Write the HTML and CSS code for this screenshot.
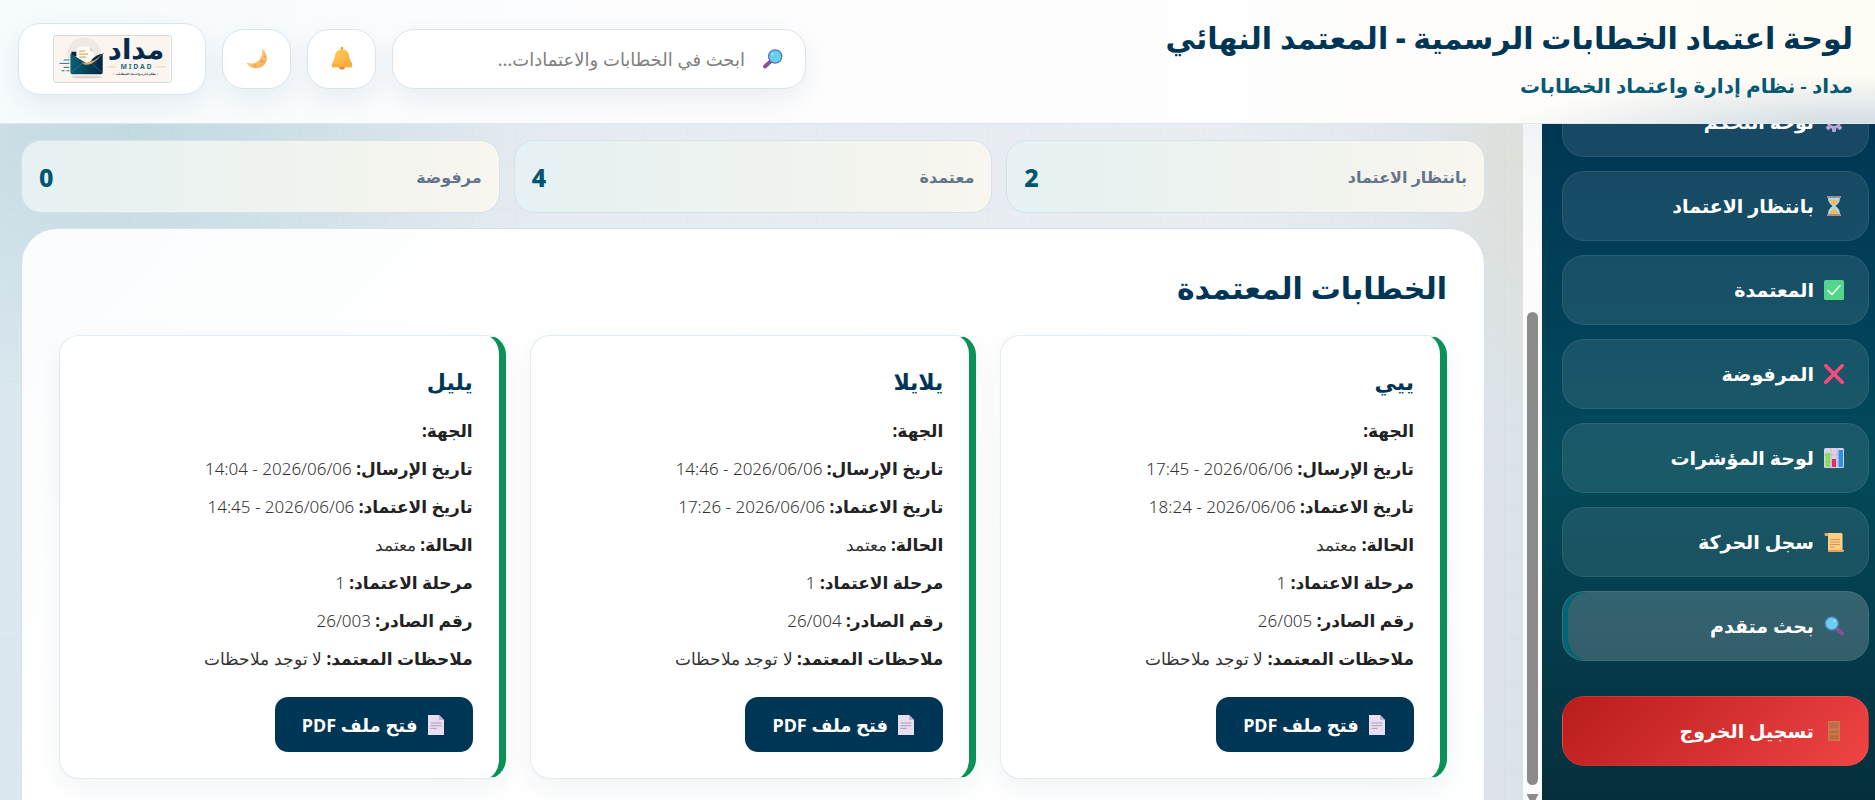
FILE: index.html
```html
<!DOCTYPE html>
<html lang="ar" dir="rtl">
<head>
  <meta charset="UTF-8" />
  <title>مداد - لوحة اعتماد الخطابات</title>
  <meta name="viewport" content="width=device-width, initial-scale=1.0"/>
  <link rel="stylesheet" href="styles.css">
</head>
<body>

  <svg class="defs" aria-hidden="true">
    <defs>
      <linearGradient id="gold" x1="0" y1="0" x2="1" y2="1">
        <stop offset="0" stop-color="#ffd05a"/><stop offset="1" stop-color="#f7a23a"/>
      </linearGradient>
      <linearGradient id="moon" x1="0" y1="0" x2="1" y2="1">
        <stop offset="0" stop-color="#ffd983"/><stop offset="1" stop-color="#f5ad5c"/>
      </linearGradient>
      <linearGradient id="navy" x1="0" y1="0" x2="1" y2="0">
        <stop offset="0" stop-color="#0b5f74"/><stop offset="1" stop-color="#03243f"/>
      </linearGradient>
    </defs>
    <symbol id="i-gear" viewBox="0 0 20 20">
      <g fill="#b8a4d0">
        <rect x="8" y="0" width="4" height="20" rx="1"/>
        <rect x="8" y="0" width="4" height="20" rx="1" transform="rotate(45 10 10)"/>
        <rect x="8" y="0" width="4" height="20" rx="1" transform="rotate(90 10 10)"/>
        <rect x="8" y="0" width="4" height="20" rx="1" transform="rotate(135 10 10)"/>
      </g>
      <circle cx="10" cy="10" r="5.500" fill="#2c4f68" stroke="#b8a4d0" stroke-width="3"/>
      <circle cx="10" cy="10" r="2" fill="#9683ad"/>
    </symbol>
    <symbol id="i-hourglass" viewBox="0 0 20 20">
      <path d="M4 2h12c0 4-2 6-4.500 8 2.500 2 4.500 4 4.500 8H4c0-4 2-6 4.500-8C6 8 4 6 4 2z" fill="#a9d8f5"/>
      <path d="M5.500 4h9c-.5 2.500-2.500 4-4.500 6-2-2-4-3.500-4.500-6zM10 12c2 1.500 4 3.500 4.500 6h-9c.5-2.500 2.500-4.500 4.500-6z" fill="#f5b95b"/>
      <path d="M3 0h14v2H3zM3 18h14v2H3z" fill="#a39189"/>
    </symbol>
    <symbol id="i-check" viewBox="0 0 20 20">
      <rect width="20" height="20" rx="1.500" fill="#52d68a"/>
      <path d="M4 10.500l4 4 8-9" fill="none" stroke="#fff" stroke-width="1.500" stroke-linecap="round" stroke-linejoin="round"/>
    </symbol>
    <symbol id="i-cross" viewBox="0 0 20 20">
      <path d="M1.800 1.800l16.400 16.400M18.200 1.800L1.800 18.200" stroke="#f94b77" stroke-width="3.600" stroke-linecap="round"/>
    </symbol>
    <symbol id="i-chart" viewBox="0 0 20 20">
      <rect width="20" height="20" rx="1.500" fill="#dcd3e6"/>
      <path d="M0 7h20M0 14h20M7 0v20M13 0v20" stroke="#bfb3cc" stroke-width=".7"/>
      <rect x="1.500" y="5" width="4.500" height="14" fill="#8bdc55"/>
      <rect x="8" y="11" width="4" height="8" fill="#e8276c"/>
      <rect x="14.500" y="2" width="4.500" height="17" fill="#2b92e8"/>
    </symbol>
    <symbol id="i-scroll" viewBox="0 0 20 20">
      <path d="M1 1h16c1.500 0 1.500 1 1.500 2v15H20c0 1.500-1 2-2 2H6c-2 0-2-1-2-3V4H2C1 4 0 2 1 1z" fill="#ffcf85"/>
      <path d="M1 1h3v3H2C1 4 0 2 1 1zM4 18h15v2H6c-1 0-2-.5-2-2z" fill="#ee9d64"/>
      <path d="M6 7.500h10M6 10h10M6 12.500h10M6 15h5" stroke="#d98b4d" stroke-width=".9"/>
    </symbol>
    <symbol id="i-search" viewBox="0 0 20 20">
      <path d="M12.500 12.500l5.500 5" stroke="#86509a" stroke-width="3.800" stroke-linecap="round"/>
      <circle cx="7.800" cy="7.500" r="6.600" fill="#67d0f0" stroke="#5b76b8" stroke-width="1.300"/>
      <circle cx="10.500" cy="5" r="1" fill="#bdf0ff"/>
    </symbol>
    <symbol id="i-door" viewBox="0 0 20 20">
      <rect x="4" y="0" width="12" height="20" fill="#cf7a43"/>
      <path d="M5.500 1.500h9v6h-9zM5.500 9.500h9v3h-9zM5.500 14h9v4.500h-9z" fill="#b96a4b"/>
    </symbol>
    <symbol id="i-bell" viewBox="0 0 22 24">
      <rect x="9.800" y="0" width="2.400" height="5" rx="1" fill="#f7941d"/>
      <ellipse cx="11" cy="21.500" rx="3" ry="2" fill="#f0772b"/>
      <path d="M11 2.500c-4.500 0-7 3-7.500 7C3 13 2.500 14 .5 17.500v3.500h21v-3.500c-2-3.500-2.500-4.500-3-8-.5-4-3-7-7.500-7z" fill="url(#gold)"/>
      <path d="M.5 17.500c6 1 15 1 21 0V21H.5z" fill="#f9b13c"/>
    </symbol>
    <symbol id="i-moon" viewBox="0 0 22 22">
      <path d="M16 1c6 5 6.500 12 2 16.500C13 22.500 4 22 .5 15c6 2 10 .5 12.500-2.500S17 6 16 1z" fill="url(#moon)"/>
      <circle cx="16" cy="14" r="1.500" fill="#ef9f50"/><circle cx="9" cy="18" r="1.300" fill="#ef9f50"/>
      <circle cx="18.500" cy="9" r="1" fill="#ef9f50"/>
    </symbol>
    <symbol id="i-file" viewBox="0 0 16 20">
      <path d="M0 0h11l5 5v15H0z" fill="#e9def0"/>
      <path d="M11 0v5h5z" fill="#c4b2d1"/>
      <path d="M2.500 8h11M2.500 10.700h11M2.500 13.400h6" stroke="#a894b5" stroke-width=".9"/>
    </symbol>
  </svg>

  <header class="header">
    <div class="header-title">
      <h1>لوحة اعتماد الخطابات الرسمية - المعتمد النهائي</h1>
      <p>مداد - نظام إدارة واعتماد الخطابات</p>
    </div>
    <div class="header-actions">
      <label class="search-box">
        <svg class="icon flip"><use href="#i-search"/></svg>
        <input type="text" placeholder="ابحث في الخطابات والاعتمادات..." aria-label="بحث">
      </label>
      <button class="icon-btn" aria-label="الإشعارات"><svg class="icon"><use href="#i-bell"/></svg></button>
      <button class="icon-btn" aria-label="الوضع الليلي"><svg class="icon"><use href="#i-moon"/></svg></button>
      <div class="logo-box">
        <svg class="logo" viewBox="0 0 118 47" role="img" aria-label="مداد MIDAD">
          <rect width="118" height="47" fill="#fcf5ef"/>
          <circle cx="30" cy="19" r="17.500" fill="#efe9e4"/>
          <ellipse cx="33" cy="42" rx="16" ry="1.500" fill="#ddd5cd"/>
          <path d="M17 16h5v5h-5z" fill="#0b2138"/>
          <path d="M23 11h13l4 5v12H23z" fill="#fffaf4"/>
          <path d="M36 11l4 5-4-1z" fill="#e3cfae"/>
          <path d="M25 15.500h6M25 18.500h9M25 21.500h7" stroke="#d8ad6a" stroke-width="1.200"/>
          <path d="M16 18v19q0 2 2 2h29q2 0 2-2V19L33 28z" fill="url(#navy)"/>
          <path d="M17 37l11-9M48 37l-10-9" stroke="#2d7d92" stroke-width=".7"/>
          <path d="M27 26.500c8 3 14-2 21-7.500-5 7-12 12-18 10z" fill="#d9aa5c"/>
          <path d="M37 25c3-3 7-7 14-7-5 2-7 5-11 7z" fill="#06294a"/>
          <path d="M9 24.500h6M5 28h10M9 32h6M7 35.500h3M12 35.500h3" stroke="#1d7180" stroke-width="1"/>
          <text class="logo-ar" x="83" y="23" text-anchor="middle">مداد</text>
          <path d="M54 31.500h8M104 31.500h9" stroke="#eccf9f" stroke-width="1"/>
          <text class="logo-en" x="83" y="34" direction="ltr" text-anchor="middle">M I D A D</text>
          <text class="logo-sub" x="83" y="40" text-anchor="middle">نظام إدارة واعتماد الخطابات</text>
          <circle cx="60" cy="39" r=".7" fill="#d8ad6a"/><circle cx="105" cy="39" r=".7" fill="#d8ad6a"/>
        </svg>
      </div>
    </div>
  </header>

  <div class="layout">
    <aside class="sidebar">
      <nav class="menu">
        <a href="#"><svg class="icon"><use href="#i-gear"/></svg>لوحة التحكم</a>
        <a href="#"><svg class="icon"><use href="#i-hourglass"/></svg>بانتظار الاعتماد</a>
        <a href="#"><svg class="icon"><use href="#i-check"/></svg>المعتمدة</a>
        <a href="#"><svg class="icon"><use href="#i-cross"/></svg>المرفوضة</a>
        <a href="#"><svg class="icon"><use href="#i-chart"/></svg>لوحة المؤشرات</a>
        <a href="#"><svg class="icon"><use href="#i-scroll"/></svg>سجل الحركة</a>
        <a href="#" class="active"><svg class="icon"><use href="#i-search"/></svg>بحث متقدم</a>
        <a href="#" class="logout"><svg class="icon"><use href="#i-door"/></svg>تسجيل الخروج</a>
      </nav>
      <div class="scrollbar" aria-hidden="true">
        <div class="thumb"></div>
        <div class="arrow"></div>
      </div>
    </aside>

    <main class="main">
      <section class="stats">
        <div class="stat"><span>بانتظار الاعتماد</span><strong>2</strong></div>
        <div class="stat"><span>معتمدة</span><strong>4</strong></div>
        <div class="stat"><span>مرفوضة</span><strong>0</strong></div>
      </section>

      <section class="panel">
        <h2>الخطابات المعتمدة</h2>
        <div class="letters">
          <article class="letter">
            <h3>ييي</h3>
            <p><b>الجهة:</b></p>
            <p><b>تاريخ الإرسال:</b> <bdi dir="rtl">2026/06/06 - 17:45</bdi></p>
            <p><b>تاريخ الاعتماد:</b> <bdi dir="rtl">2026/06/06 - 18:24</bdi></p>
            <p><b>الحالة:</b> معتمد</p>
            <p><b>مرحلة الاعتماد:</b> 1</p>
            <p><b>رقم الصادر:</b> 26/005</p>
            <p><b>ملاحظات المعتمد:</b> لا توجد ملاحظات</p>
            <a href="#" class="pdf-btn"><svg class="icon"><use href="#i-file"/></svg>فتح ملف PDF</a>
          </article>
          <article class="letter">
            <h3>يلايلا</h3>
            <p><b>الجهة:</b></p>
            <p><b>تاريخ الإرسال:</b> <bdi dir="rtl">2026/06/06 - 14:46</bdi></p>
            <p><b>تاريخ الاعتماد:</b> <bdi dir="rtl">2026/06/06 - 17:26</bdi></p>
            <p><b>الحالة:</b> معتمد</p>
            <p><b>مرحلة الاعتماد:</b> 1</p>
            <p><b>رقم الصادر:</b> 26/004</p>
            <p><b>ملاحظات المعتمد:</b> لا توجد ملاحظات</p>
            <a href="#" class="pdf-btn"><svg class="icon"><use href="#i-file"/></svg>فتح ملف PDF</a>
          </article>
          <article class="letter">
            <h3>يليل</h3>
            <p><b>الجهة:</b></p>
            <p><b>تاريخ الإرسال:</b> <bdi dir="rtl">2026/06/06 - 14:04</bdi></p>
            <p><b>تاريخ الاعتماد:</b> <bdi dir="rtl">2026/06/06 - 14:45</bdi></p>
            <p><b>الحالة:</b> معتمد</p>
            <p><b>مرحلة الاعتماد:</b> 1</p>
            <p><b>رقم الصادر:</b> 26/003</p>
            <p><b>ملاحظات المعتمد:</b> لا توجد ملاحظات</p>
            <a href="#" class="pdf-btn"><svg class="icon"><use href="#i-file"/></svg>فتح ملف PDF</a>
          </article>
        </div>
      </section>
    </main>
  </div>

</body>
</html>
```
FILE: styles.css
```css
* {
  box-sizing: border-box;
}

body {
  margin: 0;
  height: 100vh;
  display: flex;
  flex-direction: column;
  overflow: hidden;
  font-family: "Noto Sans", "DejaVu Sans", sans-serif;
  font-size: 16px;
  color: #222;
  background: #e6ebf1;
}

h1, h2, h3, p {
  margin: 0;
}

a {
  text-decoration: none;
}

.defs {
  position: absolute;
  width: 0;
  height: 0;
}

.icon {
  width: 20px;
  height: 20px;
  flex: none;
}

.flip {
  transform: scaleX(-1);
}

/* header */
.header {
  flex: none;
  height: 124px;
  display: flex;
  justify-content: space-between;
  align-items: center;
  padding: 0 22px 6px 18px;
  border-bottom: 1px solid #dde8ee;
  background:
    radial-gradient(ellipse 380px 60px at 100% 110%, #d8e1e6 30%, transparent),
    linear-gradient(to left, #fffcf5, #fefefe 35%, #fdfdfe 65%, #f6fbfd);
}

.header-title {
  padding-top: 6px;
}

.header-title h1 {
  font-size: 30px;
  line-height: 48px;
  font-weight: 900;
  color: #003655;
}

.header-title p {
  font-size: 20px;
  line-height: 48px;
  font-weight: 600;
  color: #075873;
}

.header-actions {
  display: flex;
  align-items: center;
  gap: 16px;
}

.search-box,
.icon-btn,
.logo-box {
  display: flex;
  align-items: center;
  height: 60px;
  background: #fff;
  border: 1px solid #d9e6ee;
  border-radius: 22px;
  box-shadow: 0 10px 28px rgba(0, 54, 85, 0.08);
}

.search-box {
  width: 414px;
  padding: 0 22px;
  gap: 18px;
}

.search-box input {
  flex: 1;
  min-width: 0;
  border: none;
  outline: none;
  padding: 0;
  background: none;
  font-family: inherit;
  font-size: 18px;
}

.search-box input::placeholder {
  color: #808080;
}

.icon-btn {
  width: 69px;
  padding: 0;
  justify-content: center;
  cursor: pointer;
}

.icon-btn .icon {
  width: 22px;
  height: 23px;
}

.logo-box {
  width: 188px;
  height: 72px;
  justify-content: center;
}

.logo {
  width: 119px;
  height: 48px;
  border: 1px solid #d5d9dc;
  border-radius: 3px;
}

.logo-ar {
  font-size: 28px;
  font-weight: 700;
  fill: #04294a;
}

.logo-en {
  font-size: 7px;
  font-weight: 700;
  fill: #16707f;
}

.logo-sub {
  font-size: 3px;
  font-weight: 700;
  fill: #12304a;
}

/* layout */
.layout {
  flex: 1;
  min-height: 0;
  display: flex;
}

.sidebar {
  flex: none;
  width: 352px;
  display: flex;
  overflow: hidden;
}

.menu {
  flex: 1;
  display: flex;
  flex-direction: column;
  justify-content: flex-end;
  gap: 14px;
  padding: 0 6px 34px 20px;
  background: linear-gradient(#003655, #034a5b 50%, #052f3c);
}

.menu a {
  flex: none;
  display: flex;
  align-items: center;
  gap: 10px;
  height: 70px;
  padding: 0 24px;
  font-size: 19px;
  font-weight: 900;
  color: #fff;
  background: rgba(255, 255, 255, 0.09);
  border: 1px solid rgba(255, 255, 255, 0.08);
  border-radius: 22px;
}

.menu a.active {
  background: rgba(255, 255, 255, 0.19);
  box-shadow: inset 5px 0 0 #006675;
}

.menu a.logout {
  margin-top: 21px;
  background: linear-gradient(135deg, #b91c1c, #ef4444);
}

.scrollbar {
  width: 19px;
  display: flex;
  flex-direction: column;
  align-items: center;
  justify-content: flex-end;
  gap: 9px;
  background: linear-gradient(#f1f4f6, #fcfcfc 20%);
}

.thumb {
  width: 11px;
  height: 70%;
  border-radius: 6px;
  background: #8b8b8b;
}

.arrow {
  width: 12px;
  height: 6px;
  background: #8b8b8b;
  clip-path: polygon(0 0, 100% 0, 75% 100%, 25% 100%);
}

.main {
  flex: 1;
  min-width: 0;
  padding: 16px 38px 0 21px;
  overflow: hidden;
  background:
    repeating-linear-gradient(to right, transparent 0 42px, rgba(0, 54, 85, 0.015) 42px 43px),
    repeating-linear-gradient(transparent 0 42px, rgba(0, 54, 85, 0.015) 42px 43px),
    radial-gradient(ellipse 100px 260px at 100% 5%, #dedfd9, transparent),
    radial-gradient(ellipse 420px 300px at 9% 0, #c3d9e0, transparent),
    linear-gradient(to right, #dbe8f0, #e6ebf1 30%, #e9edf2 80%, #dbe3e8);
}

.stats {
  display: grid;
  grid-template-columns: repeat(3, 1fr);
  gap: 14px;
}

.stat {
  display: flex;
  justify-content: space-between;
  align-items: center;
  height: 73px;
  padding: 0 17px;
  border: 1px solid #d3e3ec;
  border-radius: 20px;
  background: linear-gradient(to right, #e5f1f3, #f0f3ee 60%, #f8f6ef);
}

.stat span {
  font-size: 16px;
  font-weight: 800;
  color: #64748b;
}

.stat strong {
  font-size: 25px;
  font-weight: 800;
  color: #005570;
}

/* approved letters */
.panel {
  margin-top: 15px;
  padding: 35px 37px;
  min-height: 640px;
  border: 1px solid #d3e3ec;
  border-radius: 36px;
  background: linear-gradient(135deg, #fafcfd, #fff 30%, #fdfefe);
}

.panel h2 {
  font-size: 30px;
  line-height: 48px;
  font-weight: 800;
  color: #003655;
}

.letters {
  display: grid;
  grid-template-columns: repeat(3, 1fr);
  gap: 24px;
  margin-top: 23px;
}

.letter {
  padding: 26px;
  background: #fff;
  border: 1px solid #e0edf3;
  border-right: 7px solid #0a9155;
  border-radius: 20px;
  box-shadow: 0 8px 24px rgba(0, 54, 85, 0.06);
}

.letter h3 {
  font-size: 22px;
  line-height: 38px;
  margin-bottom: 12px;
  font-weight: 700;
  color: #003655;
}

.letter p {
  font-size: 17px;
  line-height: 38px;
  font-weight: 300;
  color: #333;
  white-space: nowrap;
}

.letter b {
  font-weight: 700;
  color: #222;
}

.pdf-btn {
  display: inline-flex;
  align-items: center;
  justify-content: center;
  gap: 8px;
  width: 198px;
  height: 55px;
  margin-top: 19px;
  border-radius: 13px;
  background: #003655;
  color: #fff;
  font-size: 18px;
  font-weight: 700;
}
```
